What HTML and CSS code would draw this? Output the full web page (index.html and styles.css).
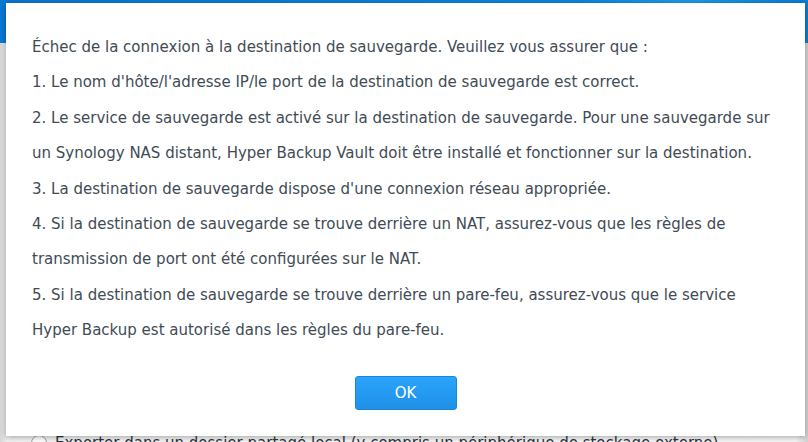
FILE: index.html
```html
<!DOCTYPE html>
<html lang="fr">
<head>
  <meta charset="UTF-8" />
  <title>Hyper Backup</title>
  <link rel="stylesheet" href="styles.css">
</head>
<body>

  <div class="app">
    <div class="topbar"></div>
    <div class="content">
      <div class="option">
        <span class="radio"></span>
        <span>Exporter dans un dossier partagé local (y compris un périphérique de stockage externe)</span>
      </div>
    </div>
  </div>

  <div class="dialog">
    <div class="message">
      <p>Échec de la connexion à la destination de sauvegarde. Veuillez vous assurer que :</p>
      <p>1. Le nom d'hôte/l'adresse IP/le port de la destination de sauvegarde est correct.</p>
      <p>2. Le service de sauvegarde est activé sur la destination de sauvegarde. Pour une sauvegarde sur un Synology NAS distant, Hyper Backup Vault doit être installé et fonctionner sur la destination.</p>
      <p>3. La destination de sauvegarde dispose d'une connexion réseau appropriée.</p>
      <p>4. Si la destination de sauvegarde se trouve derrière un NAT, assurez-vous que les règles de transmission de port ont été configurées sur le NAT.</p>
      <p>5. Si la destination de sauvegarde se trouve derrière un pare-feu, assurez-vous que le service Hyper Backup est autorisé dans les règles du pare-feu.</p>
    </div>
    <div class="actions">
      <button class="btn-ok">OK</button>
    </div>
  </div>

</body>
</html>
```

FILE: styles.css
```css
body {
  margin: 0;
  width: 808px;
  height: 442px;
  overflow: hidden;
  font-family: 'DejaVu Sans', Verdana, sans-serif;
  background-color: #e4e4e4;
}

.app {
  height: 442px;
  display: flex;
  flex-direction: column;
}

.topbar {
  height: 43px;
  background: linear-gradient(90deg, #0a78d6 0%, #0c86e0 70%, #1c9cec 85%, #0a7fd8 100%);
}

.content {
  flex: 1;
  display: flex;
  flex-direction: column;
  justify-content: flex-end;
  background: linear-gradient(90deg, #d6d6d6 0px, #f2f2f2 8px, #f7f7f7 796px, #d0d0d0 808px);
}

.option {
  display: flex;
  align-items: center;
  gap: 8px;
  padding: 0 0 0 31px;
  margin-bottom: -11px;
  height: 20px;
  font-size: 15px;
  color: #2a3440;
  white-space: nowrap;
}

.radio {
  width: 14px;
  height: 14px;
  border: 1px solid #9aa4ae;
  border-radius: 50%;
  background: #fff;
}

.dialog {
  position: absolute;
  left: 6px;
  top: 3px;
  width: 799px;
  height: 433px;
  box-sizing: border-box;
  background: #fff;
  box-shadow: 0 1px 6px rgba(0, 0, 0, 0.35);
  padding: 27px 26px 0 26px;
  color: #414b55;
}

.message p {
  margin: 0;
  font-size: 15px;
  line-height: 35.4px;
}

.actions {
  display: flex;
  justify-content: center;
  margin-top: 27px;
}

.btn-ok {
  width: 102px;
  height: 34px;
  border: 1px solid #1a86d8;
  border-radius: 3px;
  background: linear-gradient(180deg, #2ba4fb 0%, #1f90e8 100%);
  color: #fff;
  font-family: 'DejaVu Sans', Verdana, sans-serif;
  font-size: 15px;
  cursor: pointer;
}
```
